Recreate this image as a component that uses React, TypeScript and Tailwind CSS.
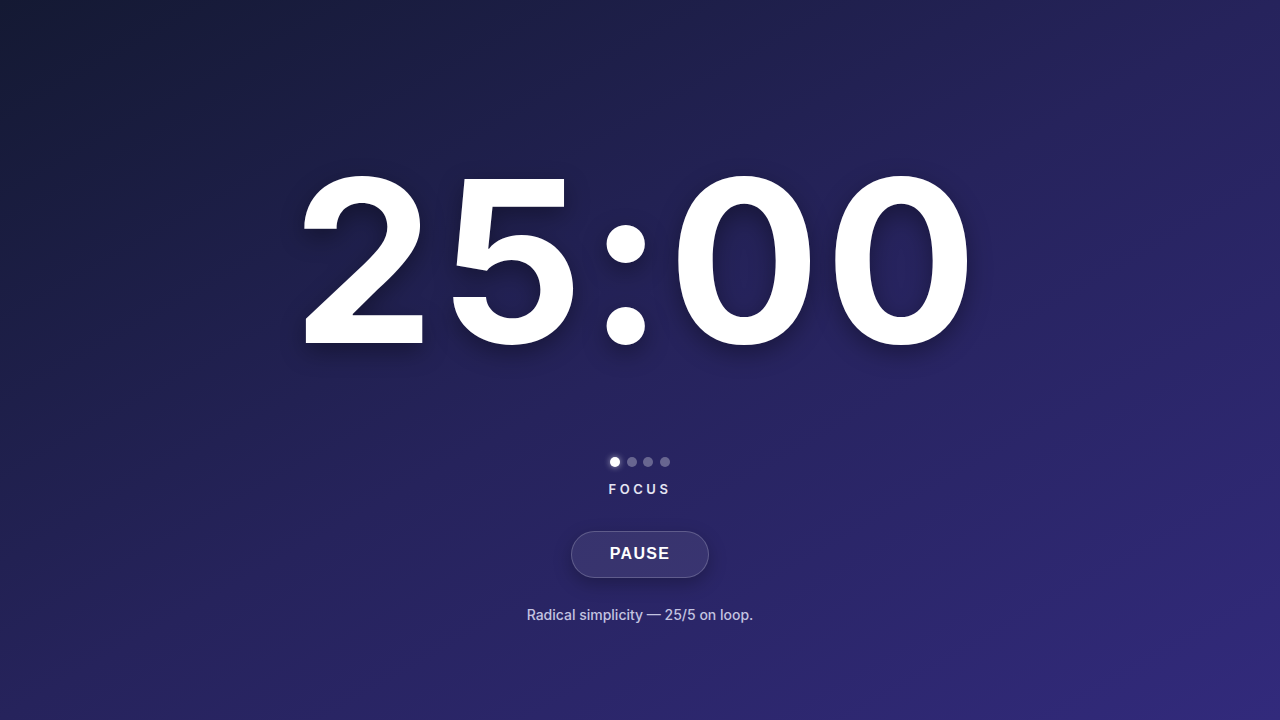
const App = () => {
  return (
    <div className="w-full h-[720px] flex flex-col items-center bg-gradient-to-br from-[#141933] via-[#26235c] to-[#322a7c] font-['Inter','Noto_Sans',sans-serif] text-white">
      {/* Timer */}
      <div className="mt-[148px] -ml-[6px] text-[226px] font-bold leading-none tracking-[0.02em] [text-shadow:0_8px_24px_rgba(0,0,0,0.35)]">
        25:00
      </div>

      {/* Cycle dots */}
      <div className="mt-[83px] flex items-center gap-[6.5px]">
        <span className="w-[10px] h-[10px] rounded-full bg-white shadow-[0_0_6px_rgba(255,255,255,0.6)]" />
        <span className="w-[10px] h-[10px] rounded-full bg-white/30" />
        <span className="w-[10px] h-[10px] rounded-full bg-white/30" />
        <span className="w-[10px] h-[10px] rounded-full bg-white/30" />
      </div>
      <div className="mt-[13px] text-[13px] font-semibold tracking-[0.27em] text-[#e4e4f2]">FOCUS</div>

      <button className="mt-[31px] w-[138px] h-[47px] rounded-full border border-white/20 bg-white/[0.07] shadow-[0_6px_18px_rgba(0,0,0,0.25)] font-['Liberation_Sans',sans-serif] font-bold text-[16px] tracking-[0.08em] text-white">
        PAUSE
      </button>

      <p className="mt-[26px] text-[14px] font-medium text-[#c3c3e0]">Radical simplicity — 25/5 on loop.</p>
    </div>
  );
};

export default App;
